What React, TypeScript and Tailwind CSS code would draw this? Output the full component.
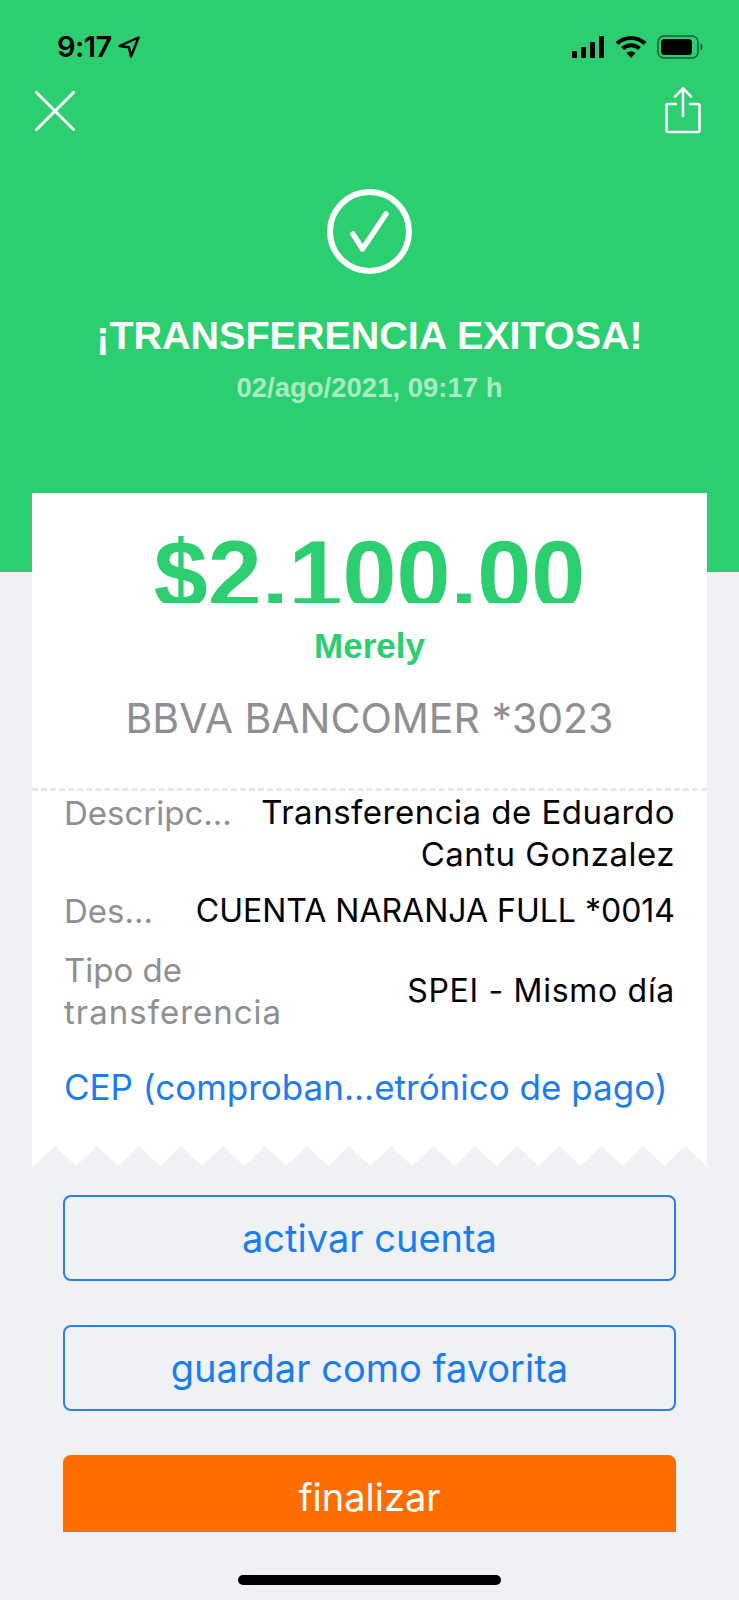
const teeth = Array.from({ length: 16 }, (_, i) => {
  const peak = 23 + i * 42.03;
  return `${peak - 21},20 ${peak},0 ${peak + 21},20`;
}).join(' ');

export default function App() {
  return (
    <div className="relative w-[739px] h-[1600px] overflow-hidden bg-[#eff1f5] font-['Inter',sans-serif]">
      {/* Green header */}
      <header className="h-[572px] bg-[#2bcf70] flex flex-col">
        <div className="h-[87px] pl-[57px] pr-[36px] flex items-center justify-between pt-[6px]">
          <div className="flex items-center gap-[5px] text-black">
            <span className="text-[29px] leading-none font-semibold tracking-[-0.5px]">9:17</span>
            <svg width="24" height="24" viewBox="0 0 24 24" fill="none" stroke="#000" strokeWidth="2.4" strokeLinejoin="round">
              <path d="M21.500 2.500 2.500 11l9.500 1.200L14 21.500z" />
            </svg>
          </div>
          <div className="flex items-center gap-[10px]">
            <svg width="34" height="22" viewBox="0 0 34 22" fill="#000">
              <rect x="1" y="15" width="5" height="7" rx="1" />
              <rect x="10" y="11" width="5" height="11" rx="1" />
              <rect x="19" y="6" width="5" height="16" rx="1" />
              <rect x="28" y="0" width="5" height="22" rx="1" />
            </svg>
            <svg width="32" height="24" viewBox="0 0 32 24" fill="none" stroke="#000" strokeWidth="4">
              <path d="M2 8.500c8-7.500 20-7.500 28 0" />
              <path d="M7.500 13.500c5-4.500 12-4.500 17 0" />
              <path d="M16 23l-4.500-5c2.500-2 6.500-2 9 0z" fill="#000" stroke="none" />
            </svg>
            <svg width="46" height="24" viewBox="0 0 46 24" fill="none">
              <rect x="1" y="1" width="40" height="22" rx="6" stroke="#000" strokeOpacity="0.55" strokeWidth="1.500" />
              <rect x="4" y="4" width="31" height="16" rx="3.500" fill="#000" />
              <path d="M43.500 8.500c1.500.5 2 2 2 3.500s-.5 3-2 3.500z" fill="#000" fillOpacity="0.55" />
            </svg>
          </div>
        </div>

        <div className="h-[47px] pl-[35px] pr-[38px] flex items-center justify-between">
          <svg width="40" height="40" viewBox="0 0 40 40" stroke="#fff" strokeWidth="3" strokeLinecap="round">
            <path d="M1.500 1.500 38.500 38.500M38.500 1.500 1.500 38.500" />
          </svg>
          <svg width="36" height="47" viewBox="0 0 36 47" fill="none" stroke="#fff" strokeWidth="2.600" strokeLinecap="round" strokeLinejoin="round">
            <path d="M18 2v27M10 9.500 18 1.500l8 8" />
            <path d="M11 17H3a1.500 1.500 0 0 0-1.500 1.500v25A1.500 1.500 0 0 0 3 45h30a1.500 1.500 0 0 0 1.500-1.500v-25A1.500 1.500 0 0 0 33 17h-8" />
          </svg>
        </div>

        <div className="mt-[55px] flex justify-center">
          <svg width="85" height="85" viewBox="0 0 85 85" fill="none" stroke="#fff" strokeLinecap="round" strokeLinejoin="round">
            <circle cx="42.500" cy="42.500" r="39.500" strokeWidth="6" />
            <path d="M26 45 35.500 60 59 25" strokeWidth="5.500" />
          </svg>
        </div>

        <h1 className="mt-[37px] text-center text-white font-['Liberation_Sans',sans-serif] font-bold text-[39.500px] leading-[48px]">
          ¡TRANSFERENCIA EXITOSA!
        </h1>
        <p className="mt-[14px] text-center text-white/60 font-['Liberation_Sans',sans-serif] font-bold text-[27.500px] leading-[30px]">
          02/ago/2021, 09:17 h
        </p>
      </header>

      {/* Receipt card */}
      <section className="relative mx-[32px] -mt-[79px] bg-white">
        <div className="h-[110px] pt-[32px] overflow-hidden text-center text-[#2bcf70] font-['Liberation_Sans',sans-serif] font-bold text-[97px] leading-[100px]">
          $2.100.00
        </div>
        <p className="mt-[23px] text-center text-[#2bcf70] font-['Liberation_Sans',sans-serif] font-bold text-[35px] leading-[40px]">
          Merely
        </p>
        <p className="mt-[24px] text-center text-[#8e8e93] text-[41px] leading-[56px]">
          BBVA BANCOMER *3023
        </p>
        <div className="mt-[42px] border-t-[3px] border-dashed border-[#e8e8ea]" />

        <div className="px-[32px] text-[33px] leading-[42px] text-black">
          <div className="flex justify-between gap-[20px]">
            <span className="text-[#8e8e93] whitespace-nowrap pt-[1px]">Descripc...</span>
            <span className="text-right w-[430px] tracking-[0.5px]">Transferencia de Eduardo Cantu Gonzalez</span>
          </div>
          <div className="mt-[15px] flex justify-between text-[32px]">
            <span className="text-[#8e8e93] text-[33px]">Des...</span>
            <span className="whitespace-nowrap">CUENTA NARANJA FULL *0014</span>
          </div>
          <div className="mt-[17px] flex justify-between items-center">
            <span className="text-[#8e8e93]">Tipo de<br /><span className="tracking-[1px]">transferencia</span></span>
            <span className="text-[32px] tracking-[0.7px]">SPEI - Mismo día</span>
          </div>
          <p className="mt-[33px] text-[#1a7cf0] text-[35px] whitespace-nowrap">CEP (comproban...etrónico de pago)</p>
        </div>

        <svg className="block mt-[38px]" width="675" height="20" viewBox="0 0 675 20">
          <polygon points={`0,20 ${teeth} 675,20`} fill="#eff1f5" />
        </svg>
      </section>

      {/* Actions */}
      <div className="mx-[63px] mt-[29px] flex flex-col">
        <button className="h-[86px] rounded-[8px] border-2 border-[#2a7fee] text-[#1a7cf0] text-[38px]">activar cuenta</button>
        <button className="mt-[44px] h-[86px] rounded-[8px] border-2 border-[#2a7fee] text-[#1a7cf0] text-[38px]">guardar como favorita</button>
        <button className="mt-[44px] h-[77px] rounded-t-[8px] bg-[#ff6c00] text-white text-[38px] pt-[8px]">finalizar</button>
      </div>

      <div className="absolute left-[238px] top-[1575px] w-[263px] h-[10px] rounded-full bg-black" />
    </div>
  );
}
